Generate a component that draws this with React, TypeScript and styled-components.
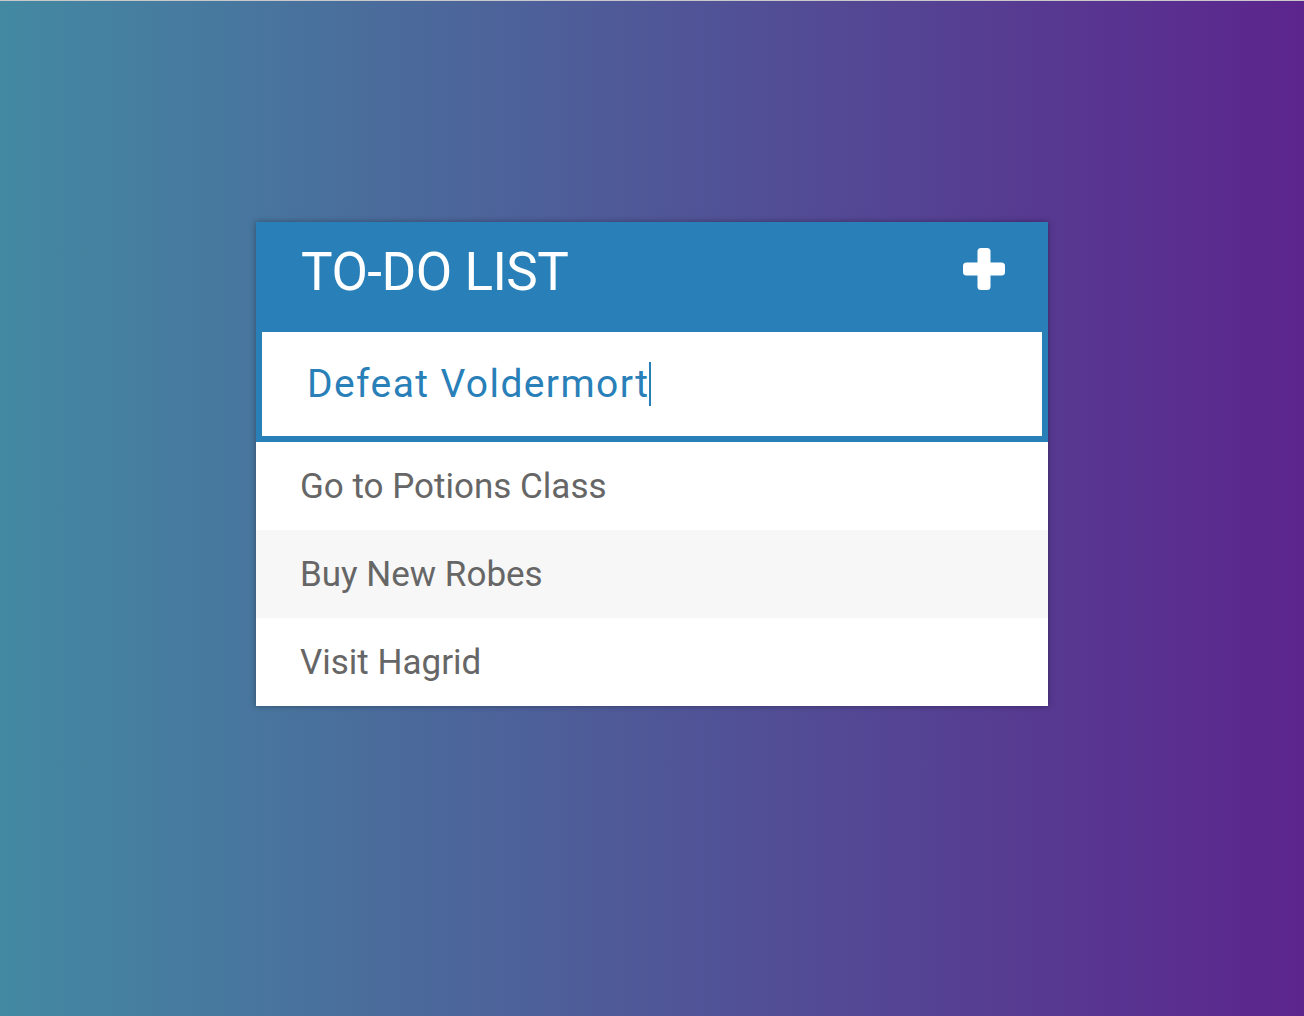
import React from "react";
import styled, { createGlobalStyle } from "styled-components";

const GlobalStyle = createGlobalStyle`
  html, body {
    margin: 0;
    padding: 0;
  }
  body {
    font-family: Roboto, "Liberation Sans", Arial, sans-serif;
  }
`;

const Page = styled.div`
  min-height: 1016px;
  box-sizing: border-box;
  border-top: 1px solid #c9c9cc;
  background: linear-gradient(to right, #4389a2, #5c258d);
  padding-top: 221px;
  display: flex;
  justify-content: center;
  align-items: flex-start;
`;

const Card = styled.div`
  width: 792px;
  background-color: #fff;
  box-shadow: 0 0 6px rgba(0, 0, 0, 0.35);
`;

const Header = styled.div`
  height: 104px;
  background-color: #2980b9;
  display: flex;
  align-items: center;
  justify-content: space-between;
  padding: 0 43px 4px 45px;
  box-sizing: border-box;
`;

const Title = styled.h1`
  margin: 0;
  font-size: 53px;
  font-weight: 400;
  color: #fff;
  letter-spacing: -0.5px;
`;

const AddButton = styled.button`
  border: none;
  background: none;
  padding: 0 0 6px;
  width: 42px;
  height: 48px;
  display: flex;
  align-items: center;
  justify-content: center;
  cursor: pointer;
`;

const InputBox = styled.div`
  height: 116px;
  box-sizing: border-box;
  border: 6px solid #2980b9;
  background-color: #fff;
  display: flex;
  align-items: center;
  padding-left: 45px;
  font-size: 39px;
  letter-spacing: 1.4px;
  color: #2980b9;
`;

const Caret = styled.span`
  display: inline-block;
  width: 2px;
  height: 44px;
  margin-left: 0;
  background-color: #2980b9;
`;

const List = styled.ul`
  list-style: none;
  margin: 0;
  padding: 0;
`;

const Item = styled.li<{ $alt?: boolean }>`
  height: 88px;
  display: flex;
  align-items: center;
  padding-left: 44px;
  font-size: 35px;
  color: #666;
  background-color: ${(p) => (p.$alt ? "#f7f7f7" : "#fff")};
`;

const todos = ["Go to Potions Class", "Buy New Robes", "Visit Hagrid"];

const PlusIcon = () => (
  <svg width="42" height="42" viewBox="0 0 42 42">
    <rect x="14.5" y="0" width="13" height="42" rx="3.5" fill="#fff" />
    <rect x="0" y="14.5" width="42" height="13" rx="3.5" fill="#fff" />
  </svg>
);

const App: React.FC = () => {
  return (
    <>
      <GlobalStyle />
      <Page>
        <Card>
          <Header>
            <Title>TO-DO LIST</Title>
            <AddButton>
              <PlusIcon />
            </AddButton>
          </Header>
          <InputBox>
            Defeat Voldermort
            <Caret />
          </InputBox>
          <List>
            {todos.map((todo, i) => (
              <Item key={todo} $alt={i % 2 === 1}>
                {todo}
              </Item>
            ))}
          </List>
        </Card>
      </Page>
    </>
  );
};

export default App;
